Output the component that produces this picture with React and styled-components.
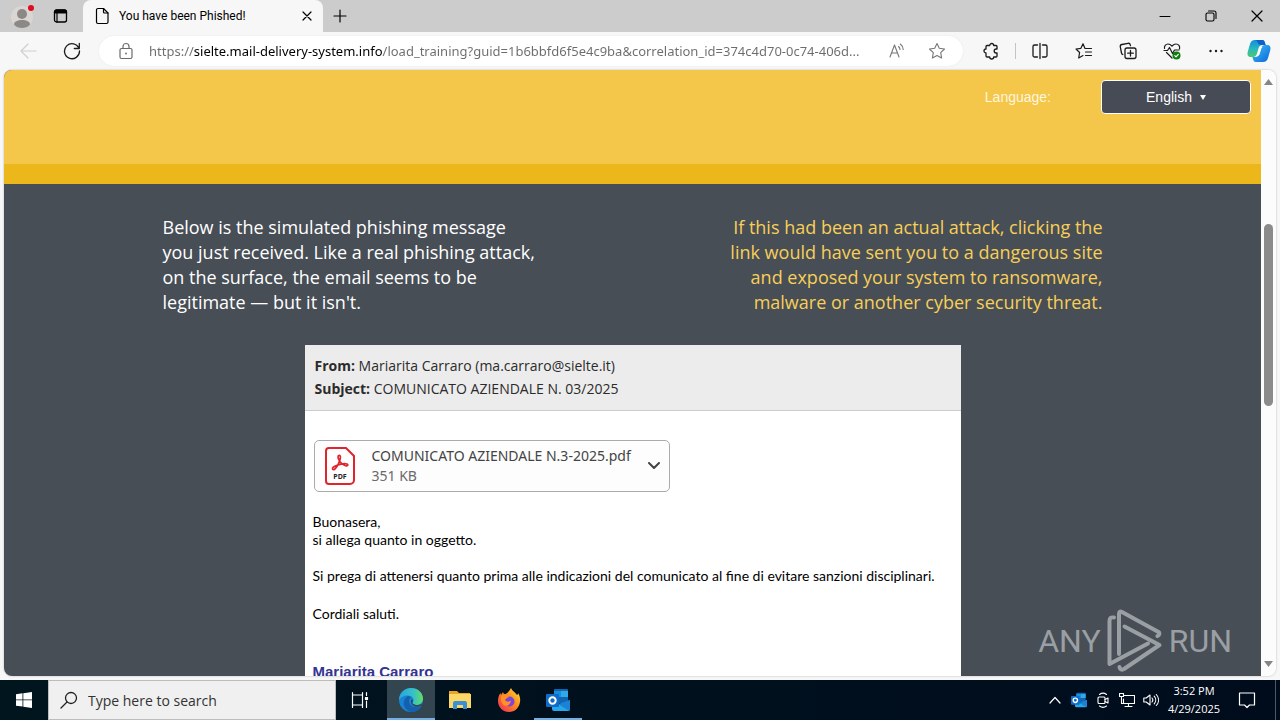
import React, { useState } from "react";
import styled, { createGlobalStyle } from "styled-components";

const GlobalStyle = createGlobalStyle`
  * {
    box-sizing: border-box;
  }
  body {
    margin: 0;
    overflow: hidden;
    font-family: "Open Sans", sans-serif;
  }
  button, input, select {
    font: inherit;
    color: inherit;
    border: none;
    background: none;
    padding: 0;
    margin: 0;
    outline: none;
  }
  svg {
    display: block;
    flex: none;
  }
`;

const Desktop = styled.div`
  display: flex;
  flex-direction: column;
  height: 100vh;
  background: #f7f7f7;
`;

// Tab strip
const TabStrip = styled.div`
  display: flex;
  align-items: stretch;
  flex: none;
  height: 32px;
  background: #cccccc;
`;

const StripButton = styled.button`
  display: flex;
  align-items: center;
  justify-content: center;
  width: ${(props) => props.$width || 34}px;
`;

const Tab = styled.div`
  display: flex;
  align-items: center;
  width: 240px;
  margin-left: 5px;
  padding: 0 8px 0 12px;
  gap: 10px;
  background: #f7f7f7;
  border-radius: 8px 8px 0 0;
  font-family: Roboto, sans-serif;
  font-size: 12px;
  color: #000;
`;

const TabTitle = styled.span`
  flex: 1;
  white-space: nowrap;
`;

const WindowButtons = styled.div`
  display: flex;
  margin-left: auto;
`;

// Toolbar
const Toolbar = styled.div`
  display: flex;
  align-items: center;
  flex: none;
  height: 38px;
  padding-left: 6px;
  color: #1b1b1b;
`;

const ToolButton = styled.button`
  display: flex;
  align-items: center;
  justify-content: center;
  width: ${(props) => props.$width || 44}px;
  height: 30px;
  color: ${(props) => props.$color || "#1b1b1b"};
`;

const AddressBar = styled.div`
  display: flex;
  align-items: center;
  flex: 1;
  min-width: 0;
  height: 30px;
  margin: 0 6px 0 5px;
  padding: 0 6px 0 7px;
  background: #fff;
  border-radius: 15px;
  box-shadow: 0 0 2px rgba(0, 0, 0, 0.08);
`;

// The host name is drawn darker than the rest of the address
const UrlInput = styled.input`
  flex: 1;
  min-width: 0;
  height: 24px;
  margin: 0 4px 0 3px;
  font-family: "Noto Sans", sans-serif;
  font-size: 13px;
  background-image: linear-gradient(90deg, #6c6c6c 45px, #000 45px, #000 233px, #6c6c6c 233px);
  background-clip: text;
  -webkit-background-clip: text;
  -webkit-text-fill-color: transparent;
`;

const Divider = styled.span`
  width: 1px;
  height: 16px;
  margin: 0 2px;
  background: #c4c4c4;
`;

// Page
const Viewport = styled.main`
  display: flex;
  flex: 1;
  min-height: 0;
  margin: 0 4px 4px;
  border-radius: 8px;
  overflow: hidden;
  position: relative;
  background: #fcfcfc;
  box-shadow: 0 0 2px rgba(0, 0, 0, 0.3);
`;

const Page = styled.div`
  flex: 1;
  min-width: 0;
  overflow: hidden;
  background: #474e56;
`;

const Hero = styled.header`
  display: flex;
  justify-content: flex-end;
  align-items: flex-start;
  height: 114px;
  padding: 10px;
  gap: 50px;
  background: #f4c64a;
  border-bottom: 20px solid #ecb71a;
  font-family: "Liberation Sans", Arial, sans-serif;
  font-size: 14px;
  color: #fff;
`;

const LanguageLabel = styled.label`
  line-height: 34px;
  color: #fff6de;
`;

const SelectBox = styled.div`
  display: flex;
  align-items: center;
  justify-content: center;
  gap: 8px;
  width: 150px;
  height: 34px;
  background: #464b55;
  border: 1px solid #fff;
  border-radius: 4px;
`;

const LanguageSelect = styled.select`
  appearance: none;
  field-sizing: content;
`;

const Intro = styled.section`
  display: flex;
  justify-content: space-between;
  max-width: 940px;
  margin: 0 auto;
  padding: 31px 0 30px;
`;

const IntroText = styled.p`
  width: 400px;
  margin: 0;
  font-size: 18px;
  line-height: 25px;
  color: ${(props) => (props.$warning ? "#f8cf58" : "#fff")};
  text-align: ${(props) => (props.$warning ? "right" : "left")};
`;

const Email = styled.article`
  max-width: 656px;
  margin: 0 auto;
  background: #fff;
`;

const EmailHeader = styled.header`
  padding: 9px 10px 10px;
  background: #ececec;
  border-bottom: 1px solid #cccccc;
  font-size: 14px;
  line-height: 23px;
  color: #2b2b2b;
`;

const EmailBody = styled.div`
  padding: 29px 8px;
  font-family: Lato, sans-serif;
  font-size: 14px;
  line-height: 18px;
  color: #000;
`;

const Attachment = styled.button`
  display: flex;
  align-items: center;
  width: 356px;
  height: 52px;
  margin: 0 1px 21px;
  padding: 0 9px;
  gap: 16px;
  border: 1px solid #ababab;
  border-radius: 5px;
  background: #fdfdfd;
  font-family: "Noto Sans", sans-serif;
  font-size: 14px;
  line-height: 20px;
  text-align: left;
  white-space: nowrap;
  color: #444;
`;

const FileText = styled.span`
  flex: 1;
`;

const FileSize = styled.span`
  display: block;
  color: #6a6a6a;
`;

const Paragraph = styled.p`
  margin: 0 0 ${(props) => props.$gap || 18}px;
`;

const Signature = styled.strong`
  display: block;
  font-family: "Liberation Sans", Arial, sans-serif;
  font-size: 15px;
  color: #333392;
`;

const Scrollbar = styled.div`
  display: flex;
  flex-direction: column;
  align-items: center;
  width: 15px;
  padding: 9px 0;
  background: #fcfcfc;
`;

const ScrollTrack = styled.div`
  flex: 1;
  width: 9px;
  padding-top: 139px;
`;

const ScrollThumb = styled.div`
  height: 182px;
  border-radius: 5px;
  background: #8b8b8b;
`;

const Watermark = styled.div`
  position: absolute;
  right: 44px;
  bottom: 3px;
  display: flex;
  align-items: center;
  gap: 6px;
  font-family: Roboto, sans-serif;
  font-size: 32px;
  color: #9a9fa4;
`;

// Taskbar
const Taskbar = styled.footer`
  display: flex;
  flex: none;
  height: 40px;
  background: linear-gradient(90deg, #00151e, #000c1c);
  color: #fff;
`;

const TaskButton = styled.button`
  display: flex;
  align-items: center;
  justify-content: center;
  width: 48px;
  margin-right: ${(props) => (props.$app ? 1 : 0)}px;
  background: ${(props) => (props.$active ? "#33454f" : "transparent")};
  box-shadow: ${(props) => (props.$running ? "inset 0 -2px #76b0e2" : "none")};
`;

const SearchBox = styled.label`
  display: flex;
  align-items: center;
  width: 288px;
  padding: 0 11px;
  gap: 10px;
  background: #f0f0f0;
  border: 1px solid #bdbdbd;
  color: #222;
`;

const SearchInput = styled.input`
  flex: 1;
  min-width: 0;
  font-size: 14px;
  &::placeholder {
    color: #333;
    opacity: 1;
  }
`;

const Apps = styled.div`
  display: flex;
  margin-left: 3px;
`;

const Tray = styled.div`
  display: flex;
  align-items: stretch;
  margin-left: auto;
`;

const TrayButton = styled.button`
  display: flex;
  align-items: center;
  justify-content: center;
  width: ${(props) => props.$width || 24}px;
`;

const Clock = styled.button`
  width: 62px;
  font-size: 11px;
  line-height: 18px;
  text-align: center;
  white-space: nowrap;
`;

const ShowDesktop = styled.button`
  width: 5px;
  margin-left: 6px;
  border-left: 1px solid #4d5965;
`;

const Icon = ({ size = 18, width, height, stroke = 1.2, children }) => (
  <svg
    width={width || size}
    height={height || size}
    viewBox={`0 0 ${width || size} ${height || size}`}
    fill="none"
    stroke="currentColor"
    strokeWidth={stroke}
    strokeLinecap="round"
    strokeLinejoin="round"
    aria-hidden="true"
  >
    {children}
  </svg>
);

const ProfileIcon = () => (
  <Icon size={28} stroke={0}>
    <circle cx="14" cy="15" r="11" fill="#d9d6d3" />
    <circle cx="14" cy="12" r="5" fill="#8b8886" />
    <path d="M6 22.500c0-3 3.500-4.500 8-4.500s8 1.500 8 4.500c-2 2.600-5 3.500-8 3.500s-6-.9-8-3.500z" fill="#8b8886" />
    <circle cx="23" cy="6" r="3" fill="#e00b1c" />
  </Icon>
);

const TabActionsIcon = () => (
  <Icon size={16}>
    <rect x="1.500" y="2" width="12" height="12" rx="2" stroke="#000" strokeWidth="1.300" />
    <path d="M1.500 4a2 2 0 0 1 2-2h8a2 2 0 0 1 2 2v1h-12z" fill="#000" stroke="#000" />
    <path d="M4 5v9" stroke="#000" />
  </Icon>
);

const PageIcon = () => (
  <Icon width={14} height={18} stroke={1.2}>
    <path d="M3 1.500h5.500L13 6v9a1.500 1.500 0 0 1-1.500 1.500H3A1.500 1.500 0 0 1 1.500 15V3A1.500 1.500 0 0 1 3 1.500z" />
    <path d="M8.500 1.500V5a1 1 0 0 0 1 1H13" />
  </Icon>
);

const CloseIcon = ({ size = 10 }) => (
  <Icon size={size} stroke={1.2}>
    <path d={`M1 1l${size - 2} ${size - 2}M${size - 1} 1L1 ${size - 1}`} />
  </Icon>
);

const BackIcon = () => (
  <Icon size={18}>
    <path d="M17 9H2M9 2L2 9l7 7" />
  </Icon>
);

const RefreshIcon = () => (
  <Icon size={18} stroke={1.3}>
    <path d="M16 6.500A7.500 7.500 0 1 0 16.500 9M16.300 1.500v5h-5" />
  </Icon>
);

const LockIcon = () => (
  <Icon size={18} stroke={1.2}>
    <rect x="3" y="6.500" width="12" height="10" rx="1.500" />
    <path d="M6 6.500V4.500a3 3 0 0 1 6 0v2" />
    <circle cx="9" cy="11.500" r=".9" fill="currentColor" stroke="none" />
  </Icon>
);

const ReadAloudIcon = () => (
  <Icon size={18} stroke={1.1}>
    <path d="M2 15L6.500 3 11 15M3.500 11h6M10.500 4.500c1 .8 1.500 1.800 1.500 3M12.300 2c1.800 1.300 2.800 3.200 2.900 5.500" />
  </Icon>
);

const StarIcon = () => (
  <Icon size={18} stroke={1.1}>
    <path d="M9 1.500l2.300 4.800 5.200.7-3.800 3.700.9 5.300L9 13.500 4.400 16l.9-5.300L1.500 7l5.200-.7z" />
  </Icon>
);

// Puzzle piece with its tab on top and left and the notch on the right
const ExtensionIcon = () => (
  <Icon size={18} stroke={1.3}>
    <path d="M5 3.500h2.700a2 2 0 0 1 4 0H14a1 1 0 0 1 1 1V7h-.8a2 2 0 0 0 0 4H15v3a1 1 0 0 1-1 1h-2.300a2 2 0 0 1-4 0H5a1 1 0 0 1-1-1v-3a2 2 0 0 1 0-4V4.500a1 1 0 0 1 1-1z" />
  </Icon>
);

const SplitIcon = () => (
  <Icon size={18} stroke={1.3}>
    <path d="M9 1.500v15M6.500 3H3.500A1.500 1.500 0 0 0 2 4.500v9A1.500 1.500 0 0 0 3.500 15h3M11.500 3h3A1.500 1.500 0 0 1 16 4.500v9a1.500 1.500 0 0 1-1.500 1.500h-3" />
  </Icon>
);

const FavoritesIcon = () => (
  <Icon size={18} stroke={1.2}>
    <path d="M16.500 6.500H10L8 1.800 5.900 6.300 1 7l3.600 3.500-.9 5.500L8 13.600M10.500 10h6M10.500 13.500h6" />
  </Icon>
);

const CollectionsIcon = () => (
  <Icon size={18} stroke={1.3}>
    <rect x="6" y="6" width="11" height="10.500" rx="2" />
    <path d="M11.500 8.500v5.500M8.700 11.200h5.600M3.800 12.500A2 2 0 0 1 2.500 11L1.300 4.800a2 2 0 0 1 1.600-2.300L9 1.300a2 2 0 0 1 2.300 1.600l.2.800" />
  </Icon>
);

const EssentialsIcon = () => (
  <Icon size={18} stroke={1.2}>
    <path d="M1.500 6.500C1 4 2.800 2 5 2c1.800 0 3 1 4 2.200C10 3 11.200 2 13 2c2.500 0 4.200 2.200 3.500 5M3.500 10.500L9 16" />
    <path d="M1 8.500h3.500L6.500 5.500l3 6 2-3.500H16" />
    <circle cx="13.500" cy="13.500" r="4" fill="#107c10" stroke="none" />
    <path d="M11.800 13.700l1.200 1.200 2.300-2.500" stroke="#fff" />
  </Icon>
);

const MoreIcon = () => (
  <Icon size={18} stroke={0}>
    <circle cx="3.500" cy="9" r="1.200" fill="#1b1b1b" />
    <circle cx="9" cy="9" r="1.200" fill="#1b1b1b" />
    <circle cx="14.500" cy="9" r="1.200" fill="#1b1b1b" />
  </Icon>
);

const CopilotIcon = () => (
  <Icon size={24} stroke={0}>
    <defs>
      <linearGradient id="copilotLeft" x1="0" y1="0" x2="0" y2="1">
        <stop offset="0" stopColor="#0f8fe0" />
        <stop offset=".55" stopColor="#2bb9b9" />
        <stop offset="1" stopColor="#4cc96f" />
      </linearGradient>
      <linearGradient id="copilotRight" x1="0" y1="0" x2="1" y2="1">
        <stop offset="0" stopColor="#41c6f5" />
        <stop offset="1" stopColor="#0a63dc" />
      </linearGradient>
    </defs>
    <path d="M8 1h7c2 0 2.500 1 3 3l.6 2h-3C13 6 12 7.500 11.300 10L10 14.500c-.8 2.200-1.800 3.500-4 3.500H4c-3 0-4-2-3.300-5L3 5c.9-2.700 2.300-4 5-4z" fill="url(#copilotLeft)" />
    <path d="M8 1h7c2 0 2.500 1 3 3l.6 2H14c-2 0-2.800-1-3.300-2.500C10.200 2 9.500 1 8 1z" fill="#115fc9" />
    <path d="M16 23H9c-2 0-2.500-1-3-3l-.6-2H8c3 0 4-1.500 4.700-4L14 9.500C14.800 7.300 15.800 6 18 6h2c3 0 4 2 3.300 5L21 19c-.9 2.700-2.300 4-5 4z" fill="url(#copilotRight)" />
    <path d="M13.200 8h2.300c-.8.600-1.200 1.500-1.600 2.700l-1.300 4.200c-.2.600-.5 1-.8 1.300H9.900c.8-.7 1.200-1.600 1.500-2.700l1.100-3.700c.2-.7.400-1.300.7-1.800z" fill="#fff" />
  </Icon>
);

const PdfIcon = () => (
  <svg width="32" height="40" viewBox="0 0 32 40" aria-hidden="true">
    <path
      d="M5 2h17l8 8v24a4 4 0 0 1-4 4H5a3 3 0 0 1-3-3V5a3 3 0 0 1 3-3z"
      fill="#fff"
      stroke="#e0242c"
      strokeWidth="2"
    />
    <path
      d="M9 23.500c-2-1.500 2-4 7-5.200s8-.6 7.800.8c-.5 2-5.800-.4-8-3.600s-2.300-6-.6-6.200c2 0 1.400 4-.8 8.500S10 24.500 9 23.500z"
      fill="none"
      stroke="#e0242c"
      strokeWidth="1.700"
    />
    <text x="16" y="33" textAnchor="middle" fontFamily="Open Sans, sans-serif" fontSize="7" fontWeight="700" fill="#222">
      PDF
    </text>
  </svg>
);

const RunLogo = () => (
  <svg width="56" height="64" viewBox="0 0 56 64" fill="none" stroke="currentColor" strokeWidth="4" strokeLinejoin="round" strokeLinecap="round" aria-hidden="true">
    <path d="M7 8.500C4 8 2.500 9 2.500 12v43L41 34.500" />
    <path d="M12 45V5c0-2 1-3 3-2l36.500 20c1.500 1 1 3-1 4" />
    <path d="M17.500 17.500l35 18.500L17 60c-2 1.500-4 .5-4.500-2" />
  </svg>
);

const EdgeIcon = () => (
  <svg width="26" height="26" viewBox="0 0 26 26" aria-hidden="true">
    <defs>
      <linearGradient id="edgeTop" x1="0" y1="0" x2="1" y2="0">
        <stop offset="0" stopColor="#2aa5dc" />
        <stop offset=".6" stopColor="#35c1c8" />
        <stop offset="1" stopColor="#66dc62" />
      </linearGradient>
    </defs>
    <circle cx="13" cy="13" r="12" fill="#1683d5" />
    <path d="M1 12C2 5 7 1 13 1c7 0 12 5 12 10.500 0 4-3 6.500-6.500 6.500-2.500 0-4.500-1-3.500-2.700C17 12 14 8.500 10 8.500c-4.500 0-8 2-9 5z" fill="url(#edgeTop)" />
    <path d="M10 9c-3 2-5 5-4 9s4 6.500 8 7c4 0 8-2.500 9.500-6-6 3-12.500 0-12.500-5 0-2 1-3 2-3.500-1-1-2-1.500-3-1.500z" fill="#155fae" />
    <path d="M14 12c-1.500 1.500-1.500 4.500 1 6.500 2.500 1.700 6.500 1.700 10-.5l-1 2.500 2-2V15c-1.500 2.300-4 3-6.500 3-3 0-5.500-1-5-2.500.6-1.200.3-2.500-.5-3.500z" fill="#33454f" />
  </svg>
);

const ExplorerIcon = () => (
  <svg width="24" height="22" viewBox="0 0 24 22" aria-hidden="true">
    <path d="M1 2h8l2 2h11v5H1z" fill="#e9a526" />
    <path d="M1 5h22v14H1z" fill="#fbd866" />
    <path d="M5 20v-6c0-1 .6-2 2-2h10c1.400 0 2 1 2 2v6h-4v-4H9v4z" fill="#3b8fd6" />
  </svg>
);

const FirefoxIcon = () => (
  <svg width="26" height="26" viewBox="0 0 26 26" aria-hidden="true">
    <defs>
      <linearGradient id="fox" x1="1" y1="0" x2="0" y2="1">
        <stop offset="0" stopColor="#ffe63c" />
        <stop offset=".45" stopColor="#ff8a1d" />
        <stop offset="1" stopColor="#ee2560" />
      </linearGradient>
    </defs>
    <path d="M15 1c1 3 4 4 6 7 1-.5 1-1 1-2 2 3 2.500 6 2 9-1 6-5 10-11 10S2 20.500 2 14c0-3.500 1-6 2.500-8l.5 2 2-3c.3 1.500 1 2 2.500 2C12 6 13 4 15 1z" fill="url(#fox)" />
    <circle cx="13.500" cy="14.500" r="5" fill="#7a45d8" />
    <path d="M5 9c3-2 6-1.500 8 1-2 .5-3 1.500-4 3 1.500 2 4 2.200 6 .5-.5 4-3.500 6-6.500 5C6 17.500 4.500 14 5 9z" fill="#ff9124" />
  </svg>
);

const OutlookIcon = ({ size = 24 }) => (
  <svg width={size} height={size} viewBox="0 0 24 24" aria-hidden="true">
    <rect x="8" y="1" width="14" height="14" rx="1" fill="#1066b5" />
    <path d="M8 3h7v6H8z" fill="#1490df" />
    <path d="M15 3h7v6h-7z" fill="#32a9e7" />
    <path d="M6 12l9 5 9-5v9a2 2 0 0 1-2 2H8a2 2 0 0 1-2-2z" fill="#28a8ea" />
    <path d="M24 12v9a2 2 0 0 1-1 1.700L12 16z" fill="#1a83d4" />
    <rect x="0" y="6" width="13" height="13" rx="1" fill="#0f6cc8" />
    <circle cx="6.500" cy="12.500" r="3.200" fill="none" stroke="#fff" strokeWidth="2" />
  </svg>
);

const App = () => {
  const [url, setUrl] = useState(
    "https://sielte.mail-delivery-system.info/load_training?guid=1b6bbfd6f5e4c9ba&correlation_id=374c4d70-0c74-406d..."
  );

  return (
    <Desktop>
      <GlobalStyle />
      <TabStrip>
        <StripButton $width={44} aria-label="Profile">
          <ProfileIcon />
        </StripButton>
        <StripButton aria-label="Tab actions">
          <TabActionsIcon />
        </StripButton>
        <Tab>
          <PageIcon />
          <TabTitle>You have been Phished!</TabTitle>
          <StripButton $width={16} aria-label="Close tab">
            <CloseIcon />
          </StripButton>
        </Tab>
        <StripButton aria-label="New tab">
          <Icon size={14} stroke={1.2}>
            <path d="M7 1v12M1 7h12" />
          </Icon>
        </StripButton>
        <WindowButtons>
          <StripButton $width={46} aria-label="Minimize">
            <Icon size={12} stroke={1}>
              <path d="M1 6.500h10" />
            </Icon>
          </StripButton>
          <StripButton $width={46} aria-label="Restore">
            <Icon size={12} stroke={1.1}>
              <rect x="1" y="3" width="8" height="8" rx="1.500" />
              <path d="M3.500 1H9a2 2 0 0 1 2 2v5.500" />
            </Icon>
          </StripButton>
          <StripButton $width={46} aria-label="Close">
            <CloseIcon size={12} />
          </StripButton>
        </WindowButtons>
      </TabStrip>

      <Toolbar>
        <ToolButton $color="#cfcfcf" aria-label="Back"><BackIcon /></ToolButton>
        <ToolButton aria-label="Refresh"><RefreshIcon /></ToolButton>
        <AddressBar>
          <ToolButton $width={40} $color="#6a6a6a" aria-label="Site information"><LockIcon /></ToolButton>
          <UrlInput
            aria-label="Address"
            value={url}
            onChange={(e) => setUrl(e.target.value)}
            spellCheck={false}
          />
          <ToolButton $width={40} $color="#777" aria-label="Read aloud"><ReadAloudIcon /></ToolButton>
          <ToolButton $width={40} $color="#777" aria-label="Add to favorites"><StarIcon /></ToolButton>
        </AddressBar>
        <ToolButton aria-label="Extensions"><ExtensionIcon /></ToolButton>
        <Divider />
        <ToolButton aria-label="Split screen"><SplitIcon /></ToolButton>
        <ToolButton aria-label="Favorites"><FavoritesIcon /></ToolButton>
        <ToolButton aria-label="Collections"><CollectionsIcon /></ToolButton>
        <ToolButton aria-label="Browser essentials"><EssentialsIcon /></ToolButton>
        <ToolButton aria-label="More"><MoreIcon /></ToolButton>
        <ToolButton $width={42} aria-label="Copilot"><CopilotIcon /></ToolButton>
      </Toolbar>

      <Viewport>
        <Page>
          <Hero>
            <LanguageLabel htmlFor="language">Language:</LanguageLabel>
            <SelectBox>
              <LanguageSelect id="language" defaultValue="English">
                <option>English</option>
              </LanguageSelect>
              <svg width="6" height="6" viewBox="0 0 6 6" fill="#fff" aria-hidden="true">
                <path d="M0 1h6L3 6z" />
              </svg>
            </SelectBox>
          </Hero>
          <Intro>
            <IntroText>
              Below is the simulated phishing message<br />
              you just received. Like a real phishing attack,<br />
              on the surface, the email seems to be<br />
              legitimate — but it isn't.
            </IntroText>
            <IntroText $warning>
              If this had been an actual attack, clicking the<br />
              link would have sent you to a dangerous site<br />
              and exposed your system to ransomware,<br />
              malware or another cyber security threat.
            </IntroText>
          </Intro>
          <Email>
            <EmailHeader>
              <div><b>From:</b> Mariarita Carraro (ma.carraro@sielte.it)</div>
              <div><b>Subject:</b> COMUNICATO AZIENDALE N. 03/2025</div>
            </EmailHeader>
            <EmailBody>
              <Attachment>
                <PdfIcon />
                <FileText>
                  COMUNICATO AZIENDALE N.3-2025.pdf
                  <FileSize>351 KB</FileSize>
                </FileText>
                <Icon width={12} height={8} stroke={2}>
                  <path d="M1 1l5 5 5-5" />
                </Icon>
              </Attachment>
              <Paragraph>
                Buonasera,<br />
                si allega quanto in oggetto.
              </Paragraph>
              <Paragraph $gap={20}>
                Si prega di attenersi quanto prima alle indicazioni del comunicato al fine di evitare sanzioni disciplinari.
              </Paragraph>
              <Paragraph $gap={40}>Cordiali saluti.</Paragraph>
              <Signature>Mariarita Carraro</Signature>
            </EmailBody>
          </Email>
        </Page>
        <Scrollbar>
          <svg width="9" height="6" viewBox="0 0 9 6" fill="#858585" aria-hidden="true">
            <path d="M0 6l4.500-6L9 6z" />
          </svg>
          <ScrollTrack>
            <ScrollThumb />
          </ScrollTrack>
          <svg width="9" height="6" viewBox="0 0 9 6" fill="#858585" aria-hidden="true">
            <path d="M0 0l4.500 6L9 0z" />
          </svg>
        </Scrollbar>
        <Watermark>
          <span>ANY</span>
          <RunLogo />
          <span>RUN</span>
        </Watermark>
      </Viewport>

      <Taskbar>
        <TaskButton aria-label="Start">
          <svg width="16" height="16" viewBox="0 0 16 16" fill="#fff" aria-hidden="true">
            <path d="M0 2.200l6.500-.9v6.200H0zM7.300 1.200L16 0v7.500H7.300zM0 8.300h6.500v6.300L0 13.700zM7.300 8.300H16V16l-8.700-1.200z" />
          </svg>
        </TaskButton>
        <SearchBox>
          <Icon size={18} stroke={1.3}>
            <circle cx="11" cy="7" r="5.500" />
            <path d="M7 11l-6 6" />
          </Icon>
          <SearchInput placeholder="Type here to search" aria-label="Search" />
        </SearchBox>
        <TaskButton aria-label="Task view">
          <Icon size={18} stroke={1.2}>
            <path d="M1.500 1.500v2.500h10V1.500M1.500 16.500V14h10v2.500M1.500 4v10M11.500 4v10M15.500 1.500v3M15.500 10v6.500" />
            <path d="M14.500 6.500h2v2h-2z" fill="#fff" />
          </Icon>
        </TaskButton>
        <Apps>
          <TaskButton $app $active $running aria-label="Microsoft Edge"><EdgeIcon /></TaskButton>
          <TaskButton $app aria-label="File Explorer"><ExplorerIcon /></TaskButton>
          <TaskButton $app aria-label="Firefox"><FirefoxIcon /></TaskButton>
          <TaskButton $app $running aria-label="Outlook"><OutlookIcon /></TaskButton>
        </Apps>
        <Tray>
          <TrayButton aria-label="Show hidden icons">
            <Icon width={12} height={8}>
              <path d="M1 7l5-5.500L11 7" />
            </Icon>
          </TrayButton>
          <TrayButton aria-label="Outlook"><OutlookIcon size={16} /></TrayButton>
          <TrayButton aria-label="Meet now">
            <Icon size={16} stroke={1.1}>
              <rect x="3" y="5" width="7" height="6.500" rx="1" />
              <path d="M10 7.500l3-1.500v5l-3-1.500M4.500 2.500C6.500 1 9.500 1 11.500 2.500M4.500 14c2 1.500 5 1.500 7 0" />
            </Icon>
          </TrayButton>
          <TrayButton aria-label="Network">
            <Icon size={16} stroke={1.1}>
              <path d="M5.500 3.500h10v8h-11V7M9.500 11.500v3M6 14.500h7M.5 1.500h4v3h-4zM2.500 4.500v7h2" />
            </Icon>
          </TrayButton>
          <TrayButton aria-label="Volume">
            <Icon size={16} stroke={1.1}>
              <path d="M.8 6v4h2.400L7 13V3L3.200 6zM9 6c1 1.200 1 2.800 0 4M11.200 4.200c2 2.200 2 5.400 0 7.600M13.300 2.500c3 3.300 3 7.700 0 11" />
            </Icon>
          </TrayButton>
          <Clock>
            3:52 PM
            <br />
            4/29/2025
          </Clock>
          <TrayButton $width={44} aria-label="Notifications">
            <Icon size={18}>
              <path d="M1.500 2h15v12h-5L9 16.500 6.500 14h-5z" />
            </Icon>
          </TrayButton>
          <ShowDesktop aria-label="Show desktop" />
        </Tray>
      </Taskbar>
    </Desktop>
  );
};

export default App;
